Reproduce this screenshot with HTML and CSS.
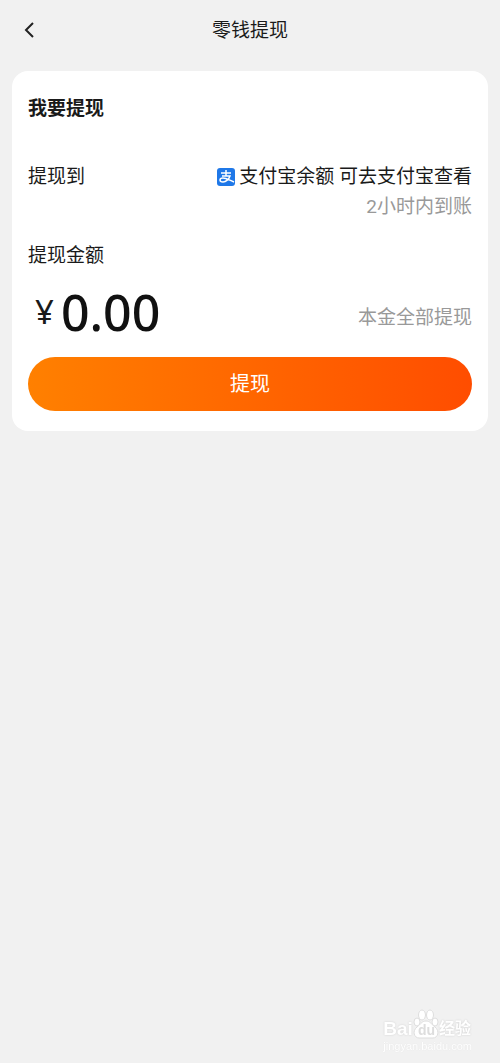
FILE: index.html
```html
<!DOCTYPE html>
<html lang="zh-CN">
<head>
  <meta charset="UTF-8">
  <meta name="viewport" content="width=device-width, initial-scale=1">
  <title>零钱提现</title>
  <link rel="stylesheet" href="styles.css">
</head>
<body>
  <header class="topbar">
    <button class="back" type="button" aria-label="返回">
      <svg width="12" height="18" viewBox="0 0 12 18"><path d="M9 1 L2 8 L9 15" fill="none" stroke="#222" stroke-width="2"/></svg>
    </button>
    <h1>零钱提现</h1>
  </header>

  <main class="card">
    <h2>我要提现</h2>
    <div class="row">
      <span>提现到</span>
      <div class="account">
        <div class="account-name">
          <svg class="alipay" width="18" height="18" viewBox="0 0 18 18">
            <rect width="18" height="18" rx="3" fill="#1f78e8"/>
            <path d="M4 5h10M9 2v6M5 8h8c-1 3-4 6-7 6-2 0-3-1-3-2 0-1 1-2 3-2 3 0 6 2 11 4" fill="none" stroke="#fff" stroke-width="1.5"/>
          </svg>
          <span>支付宝余额 可去支付宝查看</span>
        </div>
        <span class="note">2小时内到账</span>
      </div>
    </div>
    <form>
      <label for="amount">提现金额</label>
      <div class="money">
        <span class="yen">¥</span>
        <input type="text" id="amount" inputmode="decimal" value="0.00">
        <button class="all" type="button">本金全部提现</button>
      </div>
      <button class="submit" type="button">提现</button>
    </form>
  </main>

  <div class="watermark">
    <div class="brand">
      <span>Bai</span>
      <span class="paw">
        <svg width="26" height="30" viewBox="0 0 26 30">
          <ellipse cx="4" cy="13" rx="3" ry="4"/>
          <ellipse cx="9" cy="6" rx="3.5" ry="5"/>
          <ellipse cx="17" cy="6" rx="3.5" ry="5"/>
          <ellipse cx="22" cy="13" rx="3" ry="4"/>
          <path d="M13 12c-4 0-5 3-9 6C-1 22 1 29 6 29h14C25 29 27 22 22 18 18 15 17 12 13 12z"/>
        </svg>
        <span class="du">du</span>
      </span>
      <span class="jingyan">经验</span>
    </div>
    <div class="site">jingyan.baidu.com</div>
  </div>
</body>
</html>
```

FILE: styles.css
```css
body {
  font-family: Roboto, "Noto Sans CJK SC", sans-serif;
  font-size: 19px;
  line-height: 28px;
  background-color: #f1f1f1;
  margin: 0;
  color: #1a1a1a;
}
button, input {
  font: inherit;
  color: inherit;
  background: none;
  border: 0;
  padding: 0;
}
h1, h2 {
  font-size: 19px;
  margin: 0;
}
.topbar {
  display: grid;
  grid-template-columns: 36px 1fr 36px;
  align-items: center;
  height: 61px;
  padding-bottom: 10px;
}
.topbar h1 {
  font-weight: 400;
  text-align: center;
}
.back {
  display: flex;
  justify-content: flex-end;
}
.card {
  background-color: #fff;
  border-radius: 16px;
  margin: 0 12px;
  padding: 24px 16px 20px;
}
.row {
  display: flex;
  justify-content: space-between;
  margin: 40px 0 20px;
}
.account {
  text-align: right;
}
.account-name {
  display: flex;
  align-items: center;
  gap: 4px;
}
.note {
  display: block;
  color: #999;
  line-height: 31px;
}
label {
  display: block;
}
.money {
  display: flex;
  align-items: center;
  height: 60px;
  margin: 12px 0 15px;
}
.yen {
  font-family: "Noto Sans", sans-serif;
  font-size: 33px;
  padding: 0 7px;
}
#amount {
  flex: 1;
  min-width: 0;
  font-family: "Noto Sans", sans-serif;
  font-size: 50px;
  font-weight: 500;
  line-height: 60px;
  color: #111;
}
.all {
  color: #999;
  padding-top: 12px;
}
.submit {
  display: block;
  width: 100%;
  height: 54px;
  border-radius: 27px;
  background: linear-gradient(to right, #ff8000, #ff4d00);
  color: #fff;
  font-size: 20px;
}
.watermark {
  position: fixed;
  right: 28px;
  bottom: 10px;
  color: #fff;
}
.brand {
  display: flex;
  align-items: flex-end;
  font: bold 19px/20px "Liberation Sans", "Noto Sans CJK SC", sans-serif;
  text-shadow: 0 0 2px #ccc;
}
.paw {
  position: relative;
  height: 30px;
}
.paw svg {
  display: block;
  fill: #fff;
  stroke: #ddd;
}
.du {
  position: absolute;
  left: 5px;
  bottom: 1px;
  font-size: 14px;
  line-height: 16px;
  color: #ddd;
  text-shadow: none;
}
.jingyan {
  font-size: 16px;
}
.site {
  font: 11px/14px "Liberation Sans", sans-serif;
  text-shadow: 0 0 1px #ddd;
}
```
